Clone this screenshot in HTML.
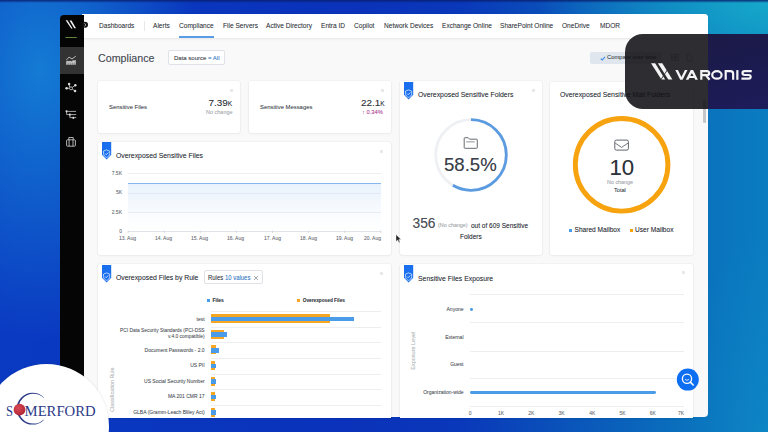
<!DOCTYPE html>
<html><head><meta charset="utf-8">
<style>
*{box-sizing:border-box;margin:0;padding:0}
html,body{width:768px;height:432px;overflow:hidden}
body{position:relative;font-family:"Liberation Sans",sans-serif;color:#3a3f48;
background:
linear-gradient(180deg,rgba(8,30,110,.9) 0px,rgba(8,30,110,0) 3px),
radial-gradient(ellipse 160px 270px at 40px 70px,rgba(22,135,215,.85),rgba(22,135,215,0)),
radial-gradient(ellipse 230px 100px at 768px 0px,rgba(25,180,205,.8),rgba(25,180,205,0)),
radial-gradient(ellipse 90px 200px at 768px 432px,rgba(20,150,205,.35),rgba(20,150,205,0)),
linear-gradient(90deg,#0a3ac2 0%,#0a32ba 45%,#0a38ba 60%,#0a58ba 76%,#0a6ebc 88%,#0a7cc0 100%);}
.a{position:absolute}
.t{position:absolute;white-space:nowrap;line-height:1}
#win{position:absolute;left:82px;top:14.3px;width:626px;height:403.2px;background:#f9f9fa;border-radius:0 4px 4px 0;overflow:hidden}
#side{position:absolute;left:60px;top:14.5px;width:24px;height:403px;background:#050505;border-radius:4px 0 0 0}
#nav{position:absolute;left:84px;top:14.3px;width:624px;height:24px;background:#fff;box-shadow:0 1px 2.5px rgba(0,0,0,.08);border-radius:0 4px 0 0}
.nv{position:absolute;top:22.6px;font-size:7.1px;color:#3b3f47;white-space:nowrap;line-height:1;transform:scaleX(0.925);transform-origin:0 0}
.card{position:absolute;background:#fff;border-radius:2px;box-shadow:0 0 0 0.6px rgba(0,0,0,.05),0 1px 3px rgba(0,0,0,.04)}
.ttl{position:absolute;font-size:7.5px;color:#30353c;white-space:nowrap;line-height:1;transform:scaleX(0.915);transform-origin:0 0;margin-top:-0.5px}
.pin{position:absolute;width:3.4px;height:3.4px;border-radius:0.8px;background:#e6e7ea}
.yl{position:absolute;font-size:5px;color:#70757c;white-space:nowrap;line-height:1;text-align:right}
.xl{position:absolute;font-size:5px;color:#70757c;white-space:nowrap;line-height:1}
.gl{position:absolute;height:1px;background:#eceef1}
#root{position:absolute;left:0;top:0;width:768px;height:432px}
.t,.nv,.ttl,.yl,.xl{text-shadow:0 0 0.5px rgba(40,45,52,.35)}
</style></head><body><div id="root">
<div id="win"></div>
<div id="side"></div>
<div id="nav"></div>
<svg class="a" style="left:60px;top:14px" width="30" height="140" viewBox="0 0 30 140">
  <path d="M5.6 6.2 L7.4 6.2 L12.6 14.6 L11.2 14.6 Z" fill="#f2f2f2"/>
  <path d="M9.5 6.6 L11.5 6.6 L16 14.2 L14.3 14.2 Z" fill="#f2f2f2"/>
  <rect x="5.4" y="23" width="11.4" height="0.9" fill="#6f9040"/>
  <rect x="0" y="33" width="24" height="27" fill="#333333"/>
  <!-- chart icon -->
  <path d="M6.2 46 L9.1 43.2 L12 44.9 L15.8 42.2" stroke="#c8c8c8" stroke-width="0.9" fill="none"/>
  <path d="M6.2 50.7 V47.6 Q7.6 45.9 9 47.2 Q10.4 46 11.6 47.4 Q13 45.6 14.3 46.6 Q15 45.8 15.8 46.2 V50.7 Z" fill="#c4c4c4"/>
  <g stroke="#333" stroke-width="0.45"><path d="M8.1 48.6 V50.8 M10.2 48.6 V50.8 M12.3 48.6 V50.8 M14.2 48.6 V50.8"/></g>
  <!-- network icon -->
  <g stroke="#d4d4d4" stroke-width="0.8" fill="none">
    <circle cx="11" cy="74.3" r="1.5"/>
    <path d="M9.6 73.2 L9.1 70 M12.3 73.4 L15.3 71.2 M9.5 74.3 L6.6 74.3 M12.3 75.2 L15.1 77"/>
  </g>
  <g fill="#dcdcdc"><circle cx="9.1" cy="70" r="1.2"/><circle cx="15.3" cy="71.2" r="1.2"/><circle cx="6.6" cy="74.3" r="1.3"/><circle cx="15.1" cy="77" r="1.2"/></g>
  <!-- filter icon -->
  <g stroke="#d8d8d8" stroke-width="0.75" fill="none">
    <path d="M7.6 97.4 H16 M6.7 97.3 V100.6 H9.4 M11 100.6 H16.2 M9.8 100.6 V103.6 H12.6 M14.2 103.6 H16.2"/>
  </g>
  <g fill="#e0e0e0"><circle cx="6.6" cy="97.3" r="1.1"/><circle cx="9.9" cy="100.6" r="1.1"/><circle cx="13.3" cy="103.8" r="1.1"/></g>
  <!-- briefcase -->
  <g stroke="#cfcfcf" stroke-width="0.85" fill="none">
    <rect x="6.6" y="125.8" width="8.8" height="6.4" rx="0.8"/>
    <path d="M9.1 125.8 V132.2 M13 125.8 V132.2 M8.8 125.8 V123.5 H13.2 V125.8"/>
  </g>
  <!-- toggle knob -->
</svg>
<svg class="a" style="left:81px;top:20px" width="9" height="10" viewBox="0 0 9 10">
  <circle cx="4" cy="4.8" r="3" fill="#111"/>
  <path d="M3.4 3.3 L5 4.8 L3.4 6.3" stroke="#ddd" stroke-width="0.8" fill="none"/>
</svg>
<span class="nv" style="left:99px">Dashboards</span>
<div class="a" style="left:144px;top:21px;width:1px;height:10px;background:#e6e8eb"></div>
<span class="nv" style="left:153px">Alerts</span>
<span class="nv" style="left:179px">Compliance</span>
<div class="a" style="left:179.3px;top:36.2px;width:34.8px;height:1.7px;background:#5a9de6"></div>
<span class="nv" style="left:223px">File Servers</span>
<span class="nv" style="left:266px">Active Directory</span>
<span class="nv" style="left:321px">Entra ID</span>
<span class="nv" style="left:354px">Copilot</span>
<span class="nv" style="left:384px">Network Devices</span>
<span class="nv" style="left:442px">Exchange Online</span>
<span class="nv" style="left:500px">SharePoint Online</span>
<span class="nv" style="left:562px">OneDrive</span>
<span class="nv" style="left:600px">MDOR</span>

<!-- header -->
<span class="t" style="left:98px;top:53px;font-size:10.7px;color:#4a4f57">Compliance</span>
<div class="a" style="left:168px;top:50px;width:57px;height:15px;background:#fff;border:0.8px solid #dfe2e6;border-radius:2px"></div>
<span class="t" style="left:174px;top:55px;font-size:6px;color:#3a3f48">Data source <span style="color:#3b86d8">= All</span></span>
<div class="a" style="left:590px;top:51.5px;width:72px;height:12.3px;background:#dfe6ed;border-radius:2px"></div>
<svg class="a" style="left:599.5px;top:55.5px" width="6" height="5" viewBox="0 0 6 5"><path d="M0.8 2.6 L2.2 4 L5 0.9" stroke="#3a8ae6" stroke-width="1.1" fill="none"/></svg>
<span class="t" style="left:607px;top:55.3px;font-size:5.8px;color:#3a3f48">Compare over time</span>

<!-- cards row 1 -->
<div class="card" style="left:98px;top:81px;width:142px;height:52px"></div>
<div class="pin" style="left:230px;top:89px"></div>
<span class="t" style="left:109px;top:105px;font-size:5.9px;color:#454a52">Sensitive Files</span>
<span class="t" style="left:208.6px;top:98.2px;font-size:9.9px;color:#30353d">7.39<span style="font-size:6.6px">K</span></span>
<span class="t" style="left:206px;top:110px;font-size:5.5px;color:#b4b7bc">No change</span>

<div class="card" style="left:248.6px;top:81px;width:142.4px;height:52px"></div>
<div class="pin" style="left:381px;top:89px"></div>
<span class="t" style="left:260px;top:105px;font-size:5.9px;color:#454a52">Sensitive Messages</span>
<span class="t" style="left:361px;top:98.2px;font-size:9.9px;color:#30353d">22.1<span style="font-size:6.6px">K</span></span>
<span class="t" style="left:362px;top:110px;font-size:5.8px;color:#c040a0">&#8593; 0.34%</span>

<!-- Overexposed Sensitive Files chart card -->
<div class="card" style="left:98px;top:142px;width:293px;height:113px"></div>
<svg class="a" style="left:102.4px;top:142.2px" width="10" height="18" viewBox="0 0 10 18">
  <path d="M0 0 H9.2 V12.8 L4.6 17.6 L0 12.8 Z" fill="#1a6fee"/>
  <path d="M4.6 7.9 L7.7 9.1 V11.5 C7.7 13.6 6.2 14.8 4.6 15.4 C3 14.8 1.5 13.6 1.5 11.5 V9.1 Z" stroke="#d6e6ff" stroke-width="0.8" fill="none"/>
  <path d="M3 11.5 L4.2 12.7 L6.3 10.5" stroke="#f0f6ff" stroke-width="0.8" fill="none"/>
</svg>
<span class="ttl" style="left:116px;top:152.2px">Overexposed Sensitive Files</span>
<div class="pin" style="left:380px;top:150px"></div>
<span class="yl" style="left:106px;width:16px;top:170.5px">7.5K</span>
<span class="yl" style="left:106px;width:16px;top:190px">5K</span>
<span class="yl" style="left:106px;width:16px;top:209.5px">2.5K</span>
<span class="yl" style="left:106px;width:16px;top:228.5px">0</span>
<div class="gl" style="left:128px;top:172.5px;width:253px"></div>
<div class="gl" style="left:128px;top:192.5px;width:253px"></div>
<div class="gl" style="left:128px;top:211.5px;width:253px"></div>
<div class="a" style="left:128px;top:183.5px;width:253px;height:47.5px;background:linear-gradient(#e9f2fc,#f3f8fd 40%,#fcfdff 75%,#fff)"></div>
<div class="a" style="left:128px;top:183px;width:253px;height:1.3px;background:#86b8ec"></div>
<div class="gl" style="left:128px;top:192.5px;width:253px;background:rgba(200,210,225,.35)"></div>
<div class="gl" style="left:128px;top:211.5px;width:253px;background:rgba(200,210,225,.35)"></div>
<div class="gl" style="left:128px;top:230.5px;width:253px;background:#dfe2e6"></div>
<svg class="a" style="left:120px;top:230px" width="270" height="4"><g stroke="#d0d3d8" stroke-width="0.8">
<path d="M8.1 0.5 V3 M44.3 0.5 V3 M80.3 0.5 V3 M116.4 0.5 V3 M152.5 0.5 V3 M188.6 0.5 V3 M224.7 0.5 V3 M260.8 0.5 V3"/></g></svg>
<span class="xl" style="left:119px;top:235.5px">13. Aug</span>
<span class="xl" style="left:155px;top:235.5px">14. Aug</span>
<span class="xl" style="left:191px;top:235.5px">15. Aug</span>
<span class="xl" style="left:227px;top:235.5px">16. Aug</span>
<span class="xl" style="left:264px;top:235.5px">17. Aug</span>
<span class="xl" style="left:300px;top:235.5px">18. Aug</span>
<span class="xl" style="left:336px;top:235.5px">19. Aug</span>
<span class="xl" style="left:364px;top:235.5px">20. Aug</span>

<!-- Overexposed Sensitive Folders -->
<div class="card" style="left:400px;top:81px;width:142px;height:174px"></div>
<svg class="a" style="left:404px;top:81.7px" width="10" height="18" viewBox="0 0 10 18">
  <path d="M0 0 H9.2 V12.8 L4.6 17.6 L0 12.8 Z" fill="#1a6fee"/>
  <path d="M4.6 7.9 L7.7 9.1 V11.5 C7.7 13.6 6.2 14.8 4.6 15.4 C3 14.8 1.5 13.6 1.5 11.5 V9.1 Z" stroke="#d6e6ff" stroke-width="0.8" fill="none"/>
  <path d="M3 11.5 L4.2 12.7 L6.3 10.5" stroke="#f0f6ff" stroke-width="0.8" fill="none"/>
</svg>
<span class="ttl" style="left:418px;top:91.5px">Overexposed Sensitive Folders</span>
<div class="pin" style="left:532px;top:89px"></div>
<svg class="a" style="left:430px;top:114px" width="82" height="82" viewBox="0 0 82 82">
  <circle cx="41" cy="41" r="35.3" stroke="#eef0f3" stroke-width="2.8" fill="none"/>
  <circle cx="41" cy="41" r="35.3" stroke="#5b9be0" stroke-width="2.8" fill="none" stroke-dasharray="129.7 92.1" transform="rotate(-90 41 41)"/>
  <path d="M34.2 24.5 Q34.2 23.7 35 23.7 H38.2 L39.6 25.2 H46.6 Q47.3 25.2 47.3 26 V33.6 Q47.3 34.3 46.6 34.3 H35 Q34.2 34.3 34.2 33.6 Z" stroke="#5f646b" stroke-width="0.95" fill="none"/><path d="M36.2 27.9 H44.7" stroke="#8f949a" stroke-width="1"/>
</svg>
<span class="t" style="left:444px;top:156px;font-size:18.6px;color:#3a3f48">58.5%</span>
<span class="t" style="left:412.5px;top:217px;font-size:13.8px;color:#4a4f57">356</span>
<span class="t" style="left:438px;top:223px;font-size:5.4px;color:#b0b3b8">(No change)</span>
<span class="t" style="left:471px;top:223px;font-size:6.5px;color:#2a2e35">out of 609 Sensitive</span>
<span class="t" style="left:460px;top:234px;font-size:6.5px;color:#2a2e35">Folders</span>

<!-- Mail folders -->
<div class="card" style="left:550px;top:82px;width:143px;height:173px"></div>
<span class="ttl" style="left:560px;top:91.5px">Overexposed Sensitive Mail Folders</span>
<svg class="a" style="left:570px;top:112px" width="104" height="104" viewBox="0 0 104 104">
  <circle cx="51.6" cy="52.8" r="46.3" stroke="#f7a30f" stroke-width="4.9" fill="none"/>
  <rect x="44.8" y="28.1" width="13.6" height="10" rx="1.5" stroke="#5f646b" stroke-width="1" fill="none"/>
  <path d="M45.2 31.1 L51.6 35.4 L58 31.1" stroke="#5f646b" stroke-width="0.9" fill="none"/>
</svg>
<span class="t" style="left:609.5px;top:156.5px;font-size:22.2px;color:#2e333b">10</span>
<span class="t" style="left:607px;top:180px;font-size:5.4px;color:#b0b3b8">No change</span>
<span class="t" style="left:614px;top:187.8px;font-size:5.6px;color:#3a3f48">Total</span>
<div class="a" style="left:568.6px;top:228.6px;width:3.4px;height:3.4px;background:#4a9be8"></div>
<span class="t" style="left:574.5px;top:227.3px;font-size:6.6px;color:#2a2e35">Shared Mailbox</span>
<div class="a" style="left:630px;top:228.6px;width:3.4px;height:3.4px;background:#f7a30f"></div>
<span class="t" style="left:635px;top:227.3px;font-size:6.6px;color:#2a2e35">User Mailbox</span>

<!-- Files by rule -->
<div class="card" style="left:98px;top:264px;width:293px;height:154px;border-radius:2px 2px 0 0"></div>
<svg class="a" style="left:102.4px;top:264.8px" width="10" height="18" viewBox="0 0 10 18">
  <path d="M0 0 H9.2 V12.8 L4.6 17.6 L0 12.8 Z" fill="#1a6fee"/>
  <path d="M4.6 7.9 L7.7 9.1 V11.5 C7.7 13.6 6.2 14.8 4.6 15.4 C3 14.8 1.5 13.6 1.5 11.5 V9.1 Z" stroke="#d6e6ff" stroke-width="0.8" fill="none"/>
  <path d="M3 11.5 L4.2 12.7 L6.3 10.5" stroke="#f0f6ff" stroke-width="0.8" fill="none"/>
</svg>
<span class="ttl" style="left:116px;top:274.8px">Overexposed Files by Rule</span>
<div class="a" style="left:203.5px;top:270.3px;width:59px;height:13.8px;background:#fff;border:0.8px solid #dfe2e6;border-radius:2px"></div>
<span class="t" style="left:208.2px;top:275.2px;font-size:6.7px;color:#3a3f48;transform:scaleX(0.89);transform-origin:0 0">Rules <span style="color:#3b86d8">10 values</span></span>
<svg class="a" style="left:253px;top:275px" width="6" height="6" viewBox="0 0 6 6"><path d="M1 1 L5 5 M5 1 L1 5" stroke="#7a7f86" stroke-width="0.7"/></svg>
<div class="pin" style="left:380px;top:272px"></div>
<div class="a" style="left:206.5px;top:299.3px;width:3.2px;height:3.2px;background:#4a9be8"></div>
<span class="t" style="left:212.5px;top:298px;font-size:5px;color:#3a3f48;font-weight:bold">Files</span>
<div class="a" style="left:297px;top:299.3px;width:3.2px;height:3.2px;background:#f5a623"></div>
<span class="t" style="left:302.7px;top:298.6px;font-size:4.75px;color:#3a3f48;font-weight:bold">Overexposed Files</span>
<div class="gl" style="left:211px;top:311px;width:170px"></div>
<div class="gl" style="left:211px;top:326.7px;width:170px"></div>
<div class="gl" style="left:211px;top:342.3px;width:170px"></div>
<div class="gl" style="left:211px;top:357.9px;width:170px"></div>
<div class="gl" style="left:211px;top:373.5px;width:170px"></div>
<div class="gl" style="left:211px;top:389.1px;width:170px"></div>
<div class="gl" style="left:211px;top:404.7px;width:170px"></div>
<!-- bars -->
<div class="a" style="left:211.4px;top:314.2px;width:119px;height:9px;background:#f5a623"></div>
<div class="a" style="left:211.4px;top:316.7px;width:142.2px;height:4.7px;background:#4a9be8"></div>
<div class="a" style="left:211.4px;top:329.8px;width:12.6px;height:9px;background:#f5a623"></div>
<div class="a" style="left:211.4px;top:332.3px;width:15.8px;height:4.7px;background:#4a9be8"></div>
<div class="a" style="left:211.4px;top:345.4px;width:4.9px;height:9px;background:#f5a623"></div>
<div class="a" style="left:211.4px;top:347.9px;width:7.7px;height:4.7px;background:#4a9be8"></div>
<div class="a" style="left:211.4px;top:361px;width:3.2px;height:9px;background:#f5a623"></div>
<div class="a" style="left:211.4px;top:363.5px;width:4.9px;height:4.7px;background:#4a9be8"></div>
<div class="a" style="left:211.4px;top:376.6px;width:3.2px;height:9px;background:#f5a623"></div>
<div class="a" style="left:211.4px;top:379.1px;width:4.9px;height:4.7px;background:#4a9be8"></div>
<div class="a" style="left:211.4px;top:392.2px;width:3.2px;height:9px;background:#f5a623"></div>
<div class="a" style="left:211.4px;top:394.7px;width:4.9px;height:4.7px;background:#4a9be8"></div>
<div class="a" style="left:211.4px;top:407.8px;width:3.2px;height:9px;background:#f5a623"></div>
<div class="a" style="left:211.4px;top:410.3px;width:4.9px;height:4.7px;background:#4a9be8"></div>
<div class="t" style="left:100px;width:104.6px;text-align:right;top:316.5px;font-size:5px;color:#50555c">test</div>
<div class="t" style="left:100px;width:104.6px;text-align:right;top:327.6px;font-size:4.85px;color:#50555c;line-height:6.5px">PCI Data Security Standards (PCI-DSS<br>v.4.0 compatible)</div>
<div class="t" style="left:100px;width:104.6px;text-align:right;top:347.5px;font-size:5px;color:#50555c">Document Passwords - 2.0</div>
<div class="t" style="left:100px;width:104.6px;text-align:right;top:363.3px;font-size:5px;color:#50555c">US PII</div>
<div class="t" style="left:100px;width:104.6px;text-align:right;top:378.7px;font-size:5px;color:#50555c">US Social Security Number</div>
<div class="t" style="left:100px;width:104.6px;text-align:right;top:394.2px;font-size:5px;color:#50555c">MA 201 CMR 17</div>
<div class="t" style="left:100px;width:104.6px;text-align:right;top:409.8px;font-size:5px;color:#50555c">GLBA (Gramm-Leach Bliley Act)</div>
<div class="t" style="left:88.2px;top:386.9px;width:50px;text-align:center;font-size:5.4px;color:#c5c8cc;transform:rotate(-90deg)">Classification Rule</div>

<!-- Sensitive Files Exposure -->
<div class="card" style="left:400px;top:263.5px;width:293px;height:154.5px;border-radius:2px 2px 0 0"></div>
<svg class="a" style="left:404px;top:265px" width="10" height="18" viewBox="0 0 10 18">
  <path d="M0 0 H9.2 V12.8 L4.6 17.6 L0 12.8 Z" fill="#1a6fee"/>
  <path d="M4.6 7.9 L7.7 9.1 V11.5 C7.7 13.6 6.2 14.8 4.6 15.4 C3 14.8 1.5 13.6 1.5 11.5 V9.1 Z" stroke="#d6e6ff" stroke-width="0.8" fill="none"/>
  <path d="M3 11.5 L4.2 12.7 L6.3 10.5" stroke="#f0f6ff" stroke-width="0.8" fill="none"/>
</svg>
<span class="ttl" style="left:418px;top:275px">Sensitive Files Exposure</span>
<div class="pin" style="left:682px;top:271px"></div>
<div class="gl" style="left:470px;top:294px;width:213.5px"></div>
<div class="gl" style="left:470px;top:322.3px;width:213.5px"></div>
<div class="gl" style="left:470px;top:350.6px;width:213.5px"></div>
<div class="gl" style="left:470px;top:378.3px;width:213.5px"></div>
<div class="gl" style="left:470px;top:406.3px;width:213.5px"></div>
<div class="t" style="left:400px;width:63.5px;text-align:right;top:306.5px;font-size:5px;color:#50555c">Anyone</div>
<div class="t" style="left:400px;width:63.5px;text-align:right;top:334.5px;font-size:5px;color:#50555c">External</div>
<div class="t" style="left:400px;width:63.5px;text-align:right;top:362.4px;font-size:5px;color:#50555c">Guest</div>
<div class="t" style="left:400px;width:63.5px;text-align:right;top:390.3px;font-size:5px;color:#50555c">Organization-wide</div>
<div class="a" style="left:470.3px;top:307.8px;width:2.8px;height:2.8px;border-radius:50%;background:#4a9be8"></div>
<div class="a" style="left:470.3px;top:391.3px;width:186px;height:2.8px;border-radius:1.4px;background:#4a9be8"></div>
<div class="t" style="left:389px;top:348.2px;width:50px;text-align:center;font-size:5.5px;color:#c5c8cc;transform:rotate(-90deg)">Exposure Level</div>
<span class="xl" style="left:468.7px;top:411px">0</span>
<span class="xl" style="left:498px;top:411px">1K</span>
<span class="xl" style="left:528.2px;top:411px">2K</span>
<span class="xl" style="left:558.5px;top:411px">3K</span>
<span class="xl" style="left:589.2px;top:411px">4K</span>
<span class="xl" style="left:619.5px;top:411px">5K</span>
<span class="xl" style="left:649.8px;top:411px">6K</span>
<span class="xl" style="left:678px;top:411px">7K</span>

<!-- scrollbar -->
<div class="a" style="left:703px;top:100px;width:3px;height:23px;border-radius:1.5px;background:#c4c6ca"></div>
<!-- floating button -->
<svg class="a" style="left:676px;top:368px" width="24" height="24" viewBox="0 0 24 24">
  <circle cx="11.8" cy="11.6" r="11" fill="#0d6ef2"/>
  <circle cx="11" cy="10.8" r="4.6" stroke="#fff" stroke-width="1.3" fill="none"/>
  <path d="M14.3 14.1 L17.2 17" stroke="#fff" stroke-width="1.5" stroke-linecap="round"/>
  <path d="M8.9 11.4 Q11 13.2 13.1 11.4" stroke="#fff" stroke-width="0.8" fill="none"/>
</svg>
<!-- cursor -->
<svg class="a" style="left:395px;top:234px" width="8" height="10" viewBox="0 0 8 10">
  <path d="M1 0.5 L1 7.5 L2.7 6 L4 8.8 L5 8.3 L3.8 5.6 L6 5.5 Z" fill="#222" stroke="#fff" stroke-width="0.4"/>
</svg>

<svg class="a" style="left:670px;top:53px" width="26" height="10" viewBox="0 0 26 10"><g stroke="#b4b8be" stroke-width="0.8" fill="none"><rect x="1.5" y="1.5" width="3" height="2.5"/><rect x="5.5" y="1.5" width="3" height="2.5"/><rect x="1.5" y="5" width="3" height="2.5"/><rect x="5.5" y="5" width="3" height="2.5"/><path d="M17 1.2 V8 H22 V4.5 L19 1.2 Z M22 4.5 L23.5 5.6"/></g></svg>
<!-- Varonis overlay -->
<div class="a" style="left:625.3px;top:33.9px;width:82.7px;height:75px;border-radius:18px 0 0 18px;background:rgba(17,16,20,.88)"></div>
<div class="a" style="left:708px;top:34px;width:60px;height:75px;background:linear-gradient(160deg,#1b1a46,#1c1b52 60%,#1e1c5c)"></div>
<svg class="a" style="left:0;top:0" width="768" height="120" viewBox="0 0 768 120">
  <path d="M651 63.3 H655.2 L665.1 79.6 H661.4 Z" fill="#f4f4f6"/>
  <path d="M657.9 63.3 H662.3 L672.4 79.5 H668.3 Z" fill="#f4f4f6"/>
  <path d="M660.6 80.2 L668.9 67.6" stroke="#2c2b30" stroke-width="0.9"/>
  <path d="M675.3 70.1 H677.9 L681.4 77 L684.9 70.1 H687.5 L682.6 79.8 H680.2 Z" fill="#f4f4f6"/>
  <path fill-rule="evenodd" d="M685.8 79.8 L690.7 70.1 H693.1 L697.9 79.8 H695.3 L694.4 77.9 H689.4 L688.5 79.8 Z M691.9 72.9 L693.5 76.1 H690.3 Z" fill="#f4f4f6"/>
  <g stroke="#f4f4f6" stroke-width="2.2" fill="none" stroke-linejoin="miter">
    <path d="M701.3 79.8 V71.2 H707 Q709.2 71.2 709.2 73.6 Q709.2 75.1 707 75.1 H702.4 M705.8 75.1 L709.6 79.8"/>
    <ellipse cx="716.9" cy="74.95" rx="4.7" ry="3.75"/>
    <path d="M725.7 79.8 V71.2 H730.5 Q733.15 71.2 733.15 73.8 V79.8"/>
    <path d="M737.35 70.1 V79.8"/>
    <path d="M751.75 71.2 H744.5 Q742.5 71.2 742.5 73.1 Q742.5 75 744.5 75 H748.8 Q750.65 75 750.65 76.85 Q750.65 78.7 748.8 78.7 H741.4"/>
  </g>
</svg>

<!-- Somerford -->
<div class="a" style="left:-16.5px;top:363.5px;width:125px;height:125px;border-radius:50%;background:#fff;box-shadow:0 0 2px rgba(0,0,0,.15)"></div>
<svg class="a" style="left:0;top:380px" width="110" height="52" viewBox="0 380 110 52">
  <path d="M43.64 397.26 A15.9 15.9 0 1 0 43.64 420.14 L43.75 419.42 A14.9 14.9 0 1 1 43.75 397.98 Z" fill="#2c3a87"/>
  <defs><radialGradient id="rb" cx="0.4" cy="0.35" r="0.7"><stop offset="0" stop-color="#d84a55"/><stop offset="1" stop-color="#b02334"/></radialGradient></defs>
  <circle cx="19.5" cy="409.7" r="5.9" fill="url(#rb)"/>
  <text x="6" y="415.6" font-family="Liberation Serif" font-size="15.6" fill="#2c3a87" textLength="7" lengthAdjust="spacingAndGlyphs">S</text>
  <text x="24.6" y="415.6" font-family="Liberation Serif" font-size="15.4" fill="#2c3a87" textLength="71" lengthAdjust="spacingAndGlyphs">MERFORD</text>
</svg>

</div></body></html>
